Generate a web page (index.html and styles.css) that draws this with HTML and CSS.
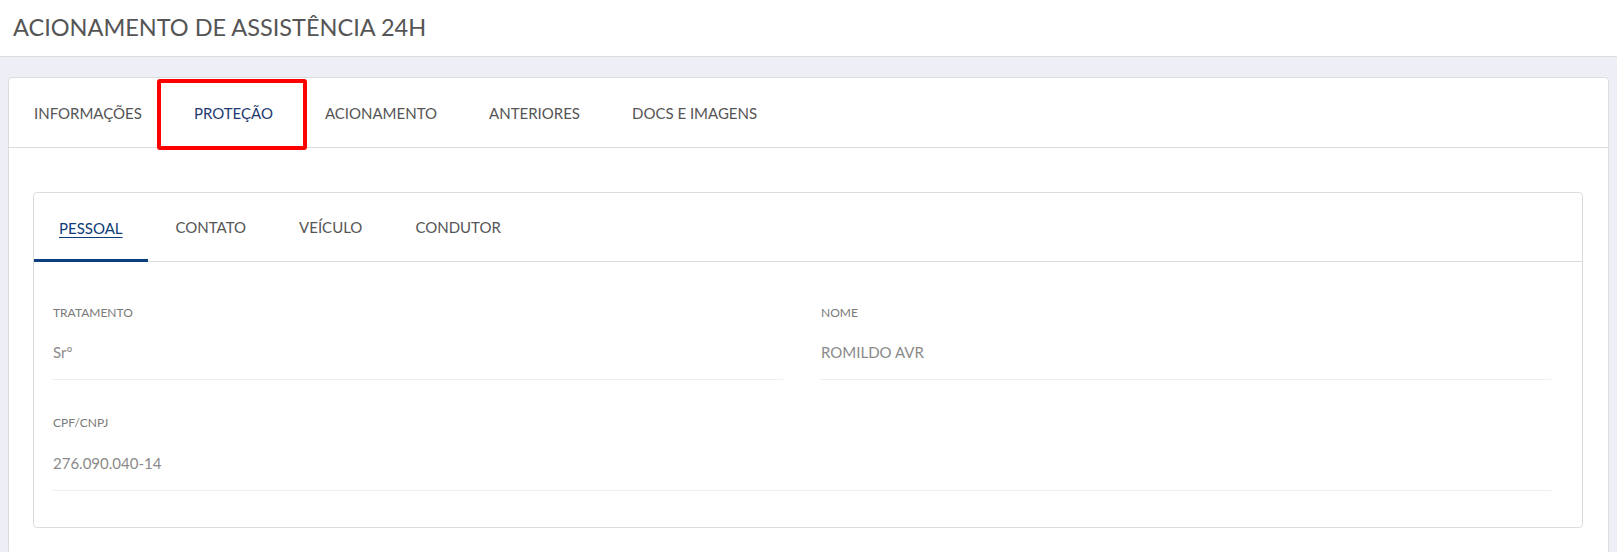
FILE: index.html
```html
<!DOCTYPE html>
<html lang="pt-BR">
<head>
<meta charset="utf-8">
<title>Acionamento de Assistência 24H</title>
<link rel="stylesheet" href="styles.css">
</head>
<body>
  <header class="page-header">
    <h1 class="page-title">ACIONAMENTO DE ASSISTÊNCIA 24H</h1>
  </header>

  <main class="page-content">
    <section class="card">
      <nav class="tabs">
        <a class="tab">INFORMAÇÕES</a>
        <a class="tab tab-active">PROTEÇÃO<span class="highlight"></span></a>
        <a class="tab">ACIONAMENTO</a>
        <a class="tab">ANTERIORES</a>
        <a class="tab">DOCS E IMAGENS</a>
      </nav>

      <div class="card-body">
        <section class="subcard">
          <nav class="subtabs">
            <a class="subtab subtab-active">PESSOAL</a>
            <a class="subtab">CONTATO</a>
            <a class="subtab">VEÍCULO</a>
            <a class="subtab">CONDUTOR</a>
          </nav>

          <div class="subcard-body">
            <div class="field">
              <div class="field-label">TRATAMENTO</div>
              <div class="field-value">Srº</div>
            </div>
            <div class="field">
              <div class="field-label">NOME</div>
              <div class="field-value">ROMILDO AVR</div>
            </div>
            <div class="field field-wide">
              <div class="field-label">CPF/CNPJ</div>
              <div class="field-value">276.090.040-14</div>
            </div>
          </div>
        </section>
      </div>
    </section>
  </main>
</body>
</html>
```

FILE: styles.css
```css
* {
  box-sizing: border-box;
}

html, body {
  margin: 0;
  height: 100%;
}

body {
  background: #eeeef7;
  font-family: "Lato", "Open Sans", "Liberation Sans", sans-serif;
  color: #555;
  overflow: hidden;
}

/* top header bar */
.page-header {
  background: #fff;
  height: 57px;
  border-bottom: 1px solid #dcdcdc;
  padding: 0 13px 2px;
  display: flex;
  align-items: center;
}

.page-title {
  margin: 0;
  font-size: 23.5px;
  font-weight: 400;
  color: #555;
}

.page-content {
  padding: 20px 8px 0 8px;
}

/* outer card */
.card {
  background: #fff;
  border: 1px solid #dcdcdc;
  border-radius: 4px;
}

.tabs {
  display: flex;
  gap: 2px;
  height: 70px;
  border-bottom: 1px solid #dcdcdc;
}

.tab {
  position: relative;
  display: flex;
  align-items: center;
  padding: 0 25px;
  font-size: 15px;
  color: #555;
  cursor: pointer;
}

.tab-active {
  color: #1f3a72;
}

/* red annotation frame drawn over the active tab */
.highlight {
  position: absolute;
  left: -12px;
  right: -9px;
  top: 1px;
  bottom: -3px;
  border: 4px solid #ff0000;
  border-radius: 3px;
  pointer-events: none;
}

.card-body {
  padding: 44px 25px 26px 24px;
}

/* inner card */
.subcard {
  border: 1px solid #dcdcdc;
  border-radius: 4px;
}

.subtabs {
  display: flex;
  gap: 3px;
  height: 69px;
  border-bottom: 1px solid #dcdcdc;
}

.subtab {
  display: flex;
  align-items: center;
  padding: 0 25px;
  font-size: 15px;
  color: #555;
  cursor: pointer;
}

.subtab-active {
  color: #0d3c78;
  text-decoration: underline;
  text-underline-offset: 3px;
  box-shadow: inset 0 -3px 0 #0b3e7a;
  margin-bottom: -1px;
}

.subcard-body {
  display: grid;
  grid-template-columns: 1fr 1fr;
  column-gap: 38px;
  row-gap: 35px;
  padding: 43px 31px 36px 19px;
}

.field {
  border-bottom: 1px solid #eeeeee;
  padding-bottom: 15px;
}

.field-wide {
  grid-column: 1 / -1;
}

.field-wide .field-value {
  margin-top: 20px;
}

.field-label {
  font-size: 12px;
  line-height: 16px;
  color: #7a7a7a;
}

.field-value {
  margin-top: 19px;
  font-size: 15px;
  line-height: 24px;
  color: #8a8a8a;
}
```
